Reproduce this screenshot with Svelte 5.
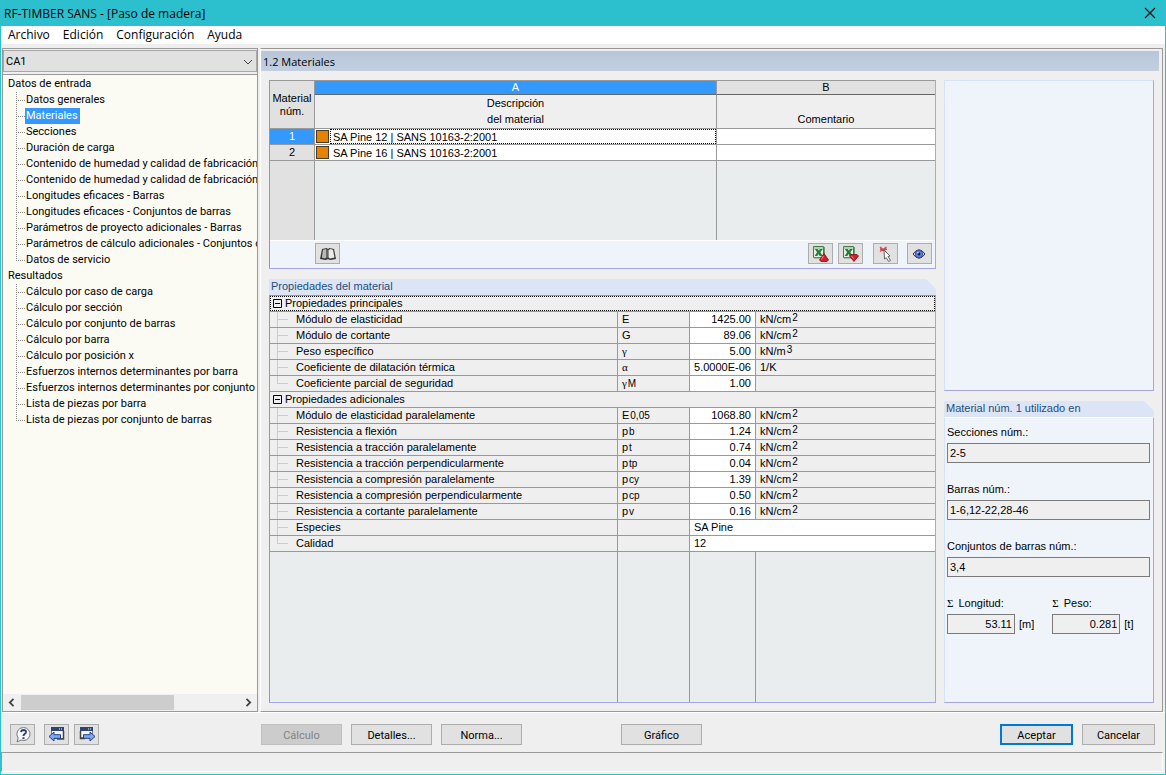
<script lang="ts">
  const menu = ['Archivo', 'Edición', 'Configuración', 'Ayuda']

  const tree = [
    {
      label: 'Datos de entrada',
      items: [
        'Datos generales',
        'Materiales',
        'Secciones',
        'Duración de carga',
        'Contenido de humedad y calidad de fabricación',
        'Contenido de humedad y calidad de fabricación',
        'Longitudes eficaces - Barras',
        'Longitudes eficaces - Conjuntos de barras',
        'Parámetros de proyecto adicionales - Barras',
        'Parámetros de cálculo adicionales - Conjuntos de barras',
        'Datos de servicio'
      ]
    },
    {
      label: 'Resultados',
      items: [
        'Cálculo por caso de carga',
        'Cálculo por sección',
        'Cálculo por conjunto de barras',
        'Cálculo por barra',
        'Cálculo por posición x',
        'Esfuerzos internos determinantes por barra',
        'Esfuerzos internos determinantes por conjunto de barras',
        'Lista de piezas por barra',
        'Lista de piezas por conjunto de barras'
      ]
    }
  ]

  const materials = [
    { id: 1, name: 'SA Pine 12 | SANS 10163-2:2001' },
    { id: 2, name: 'SA Pine 16 | SANS 10163-2:2001' }
  ]

  // name, symbol, subscript, value, unit, exponent
  const groups = [
    {
      label: 'Propiedades principales',
      rows: [
        ['Módulo de elasticidad', 'E', '', '1425.00', 'kN/cm', '2'],
        ['Módulo de cortante', 'G', '', '89.06', 'kN/cm', '2'],
        ['Peso específico', 'γ', '', '5.00', 'kN/m', '3'],
        ['Coeficiente de dilatación térmica', 'α', '', '5.0000E-06', '1/K', ''],
        ['Coeficiente parcial de seguridad', 'γ', 'M', '1.00', '', '']
      ]
    },
    {
      label: 'Propiedades adicionales',
      rows: [
        ['Módulo de elasticidad paralelamente', 'E', '0,05', '1068.80', 'kN/cm', '2'],
        ['Resistencia a flexión', 'p', 'b', '1.24', 'kN/cm', '2'],
        ['Resistencia a tracción paralelamente', 'p', 't', '0.74', 'kN/cm', '2'],
        ['Resistencia a tracción perpendicularmente', 'p', 'tp', '0.04', 'kN/cm', '2'],
        ['Resistencia a compresión paralelamente', 'p', 'cy', '1.39', 'kN/cm', '2'],
        ['Resistencia a compresión perpendicularmente', 'p', 'cp', '0.50', 'kN/cm', '2'],
        ['Resistencia a cortante paralelamente', 'p', 'v', '0.16', 'kN/cm', '2']
      ],
      texts: [
        ['Especies', 'SA Pine'],
        ['Calidad', '12']
      ]
    }
  ]

  const usedIn = [
    { id: 'sections', label: 'Secciones núm.:', value: '2-5' },
    { id: 'members', label: 'Barras núm.:', value: '1-6,12-22,28-46' },
    { id: 'sets', label: 'Conjuntos de barras núm.:', value: '3,4' }
  ]

  const totals = [
    { id: 'length', label: 'Longitud:', value: '53.11', unit: '[m]' },
    { id: 'weight', label: 'Peso:', value: '0.281', unit: '[t]' }
  ]

  let page = $state('Materiales')
  let current = $state(1)
  let open = $state([true, true])
</script>

{#snippet excel()}
  <path d="M1.500 1.500h10v11h-10z" fill="#e4f1e2" stroke="#3f7f45" />
  <path d="M12.500 2v9M2 13h9" stroke="#6d9c70" />
  <path d="M1.500 3h10" stroke="#7fb184" />
  <path d="M2.800 4h3l1 1.600L8 4h2.800L8.300 7.200 10.800 11H7.700L6.500 9 5.300 11H2.600l2.500-3.800z" fill="#2f7a3b" />
{/snippet}

{#snippet windowIcon()}
  <path d="M3.500 1.500h12v11h-12z" fill="#f4f6fb" stroke="#777c86" />
  <path d="M3 1h13v4H3z" fill="#30446f" />
  <path d="M11 3h1M13 3h1" stroke="#fff" />
  <path d="M15.500 5v8H9" fill="none" stroke="#444" stroke-width="1.500" />
{/snippet}

<div class="window">
  <header class="titlebar">
    <span>RF-TIMBER SANS - [Paso de madera]</span>
    <button class="close" aria-label="Cerrar">
      <svg width="12" height="12" viewBox="0 0 12 12"><path d="M1 1l10 10M11 1L1 11" stroke="#111" stroke-width="1.200" /></svg>
    </button>
  </header>

  <nav class="menu">
    {#each menu as item}
      <button>{item}</button>
    {/each}
  </nav>

  <div class="main">
    <aside class="sidebar">
      <div class="case">
        <select aria-label="Caso">
          <option>CA1</option>
        </select>
        <svg width="10" height="6" viewBox="0 0 10 6"><path d="M1 1l4 4 4-4" fill="none" stroke="#444" /></svg>
      </div>
      <div class="tree">
        {#each tree as branch}
          <div class="branch">{branch.label}</div>
          <ul>
            {#each branch.items as item}
              <li>
                <a href="#page" class:selected={page === item} onclick={() => (page = item)}>{item}</a>
              </li>
            {/each}
          </ul>
        {/each}
      </div>
      <div class="scrollbar">
        <button aria-label="Izquierda">
          <svg width="7" height="9" viewBox="0 0 7 9"><path d="M5.500 .8L1.800 4.500l3.700 3.700" fill="none" stroke="#444" stroke-width="1.800" /></svg>
        </button>
        <div class="track"><div class="thumb"></div></div>
        <button aria-label="Derecha">
          <svg width="7" height="9" viewBox="0 0 7 9"><path d="M1.500 .8l3.700 3.700-3.700 3.700" fill="none" stroke="#444" stroke-width="1.800" /></svg>
        </button>
      </div>
    </aside>

    <section class="content">
      <h1>1.2 Materiales</h1>
      <div class="columns">
        <div class="left">
          <div class="panel list">
            <table class="materials">
              <colgroup><col class="num" /><col /><col class="comment" /></colgroup>
              <thead>
                <tr class="letters">
                  <th rowspan="2" class="corner">Material<br />núm.</th>
                  <th class="letter active">A</th>
                  <th class="letter">B</th>
                </tr>
                <tr class="titles">
                  <th>Descripción<br />del material</th>
                  <th>Comentario</th>
                </tr>
              </thead>
              <tbody>
                {#each materials as m}
                  <tr class:current={current === m.id} onclick={() => (current = m.id)}>
                    <th>{m.id}</th>
                    <td>
                      <div class="material"><i class="swatch"></i><span>{m.name}</span></div>
                    </td>
                    <td></td>
                  </tr>
                {/each}
              </tbody>
            </table>
            <div class="filler materials-filler"><i></i><i></i><i></i></div>
            <div class="toolbar">
              <button class="icon library" aria-label="Biblioteca">
                <svg width="18" height="16" viewBox="0 0 18 16">
                  <path d="M1 13L3 3 8 2l1 1.500L10 2l5 1 2 10-5.500 1-2.500-.8-2.500.8z" fill="#34343c" />
                  <path d="M2.800 11.500L4 3.800 7 3v8.500l-1 1z" fill="#b9b9b2" />
                  <path d="M9.500 4.500L11 3l3 .8 1.500 7.700-4.500 1-1.500-1z" fill="#ecece6" />
                  <path d="M7 3l1.800 1.500v8L7 11.500z" fill="#6d6d68" />
                </svg>
              </button>
              <button class="icon" aria-label="Exportar a Excel">
                <svg width="18" height="18" viewBox="0 0 18 18">
                  {@render excel()}
                  <path d="M12 8.500l4.500 6.500-1.500 1.500H9L7.500 15z" fill="#d3202c" stroke="#7d0d14" stroke-width=".8" />
                  <path d="M11.500 11l-2 3.500" stroke="#f08a8f" />
                </svg>
              </button>
              <button class="icon" aria-label="Importar de Excel">
                <svg width="18" height="18" viewBox="0 0 18 18">
                  {@render excel()}
                  <path d="M12 16.500L7.500 11 9 9.500h6l1.500 1.500z" fill="#d3202c" stroke="#7d0d14" stroke-width=".8" />
                  <path d="M9.500 11l2 2.500" stroke="#f08a8f" />
                </svg>
              </button>
              <button class="icon pick" aria-label="Seleccionar">
                <svg width="18" height="18" viewBox="0 0 18 18">
                  <path d="M3 2l6 5M9.500 2L3 6.500M3 4.200h7" stroke="#d8454c" stroke-width="1.500" />
                  <path d="M7 5l6 6-2 .5 2.500 3.800-1.800 1.200-2.500-3.800L7.500 14z" fill="#fff" stroke="#555" stroke-width=".9" />
                </svg>
              </button>
              <button class="icon view" aria-label="Ver">
                <svg width="16" height="14" viewBox="0 0 16 14">
                  <path d="M1 7Q7-1.500 13 7 7 15.500 1 7z" fill="#c3cdf0" stroke="#333" />
                  <circle cx="7" cy="7" r="3.700" fill="#5d80e0" stroke="#2b459c" stroke-width=".8" />
                  <circle cx="7" cy="7" r="1.400" fill="#0d1330" />
                  <circle cx="6" cy="5.800" r=".8" fill="#dfe7ff" />
                </svg>
              </button>
            </div>
          </div>

          <div class="caption">Propiedades del material</div>
          <div class="panel properties">
            <table>
              <colgroup><col /><col class="symbol" /><col class="value" /><col class="unit" /></colgroup>
              {#each groups as group, g}
                <tbody>
                  <tr class="group" class:focused={g === 0}>
                    <th colspan="4">
                      <button onclick={() => (open[g] = !open[g])}>
                        <svg width="9" height="9" viewBox="0 0 9 9">
                          <path d={open[g] ? 'M.5.500h8v8h-8zM2 4.500h5' : 'M.5.500h8v8h-8zM2 4.500h5M4.500 2v5'} fill="none" stroke="#000" />
                        </svg>
                        {group.label}
                      </button>
                    </th>
                  </tr>
                  {#if open[g]}
                    {#each group.rows as [name, symbol, sub, value, unit, exp]}
                      <tr>
                        <th class="name">{name}</th>
                        <td class:greek={symbol === 'γ' || symbol === 'α'}>{symbol}{#if sub}<sub>{sub}</sub>{/if}</td>
                        <td class="number">{value}</td>
                        <td>{unit}{#if exp}<sup>{exp}</sup>{/if}</td>
                      </tr>
                    {/each}
                    {#each group.texts ?? [] as [name, value]}
                      <tr>
                        <th class="name">{name}</th>
                        <td></td>
                        <td class="text" colspan="2">{value}</td>
                      </tr>
                    {/each}
                  {/if}
                </tbody>
              {/each}
            </table>
            <div class="filler properties-filler"><i></i><i></i><i></i><i></i></div>
          </div>
        </div>

        <div class="right">
          <div class="panel preview"></div>
          <div class="caption">Material núm. {current} utilizado en</div>
          <div class="panel used">
            {#each usedIn as field}
              <div class="field">
                <label for={field.id}>{field.label}</label>
                <input id={field.id} value={field.value} readonly />
              </div>
            {/each}
            <div class="totals">
              {#each totals as total}
                <div class="field">
                  <label for={total.id}><span class="sigma">Σ</span> {total.label}</label>
                  <div class="sum">
                    <input id={total.id} value={total.value} readonly />
                    <span>{total.unit}</span>
                  </div>
                </div>
              {/each}
            </div>
          </div>
        </div>
      </div>
    </section>
  </div>

  <footer class="actions">
    <div class="nav">
      <button class="icon help" aria-label="Ayuda">
        <svg width="18" height="18" viewBox="0 0 18 18">
          <path d="M9.500 1.500a6.500 6.500 0 1 1-2.500 12.500L3 16l1.200-4A6.500 6.500 0 0 1 9.500 1.500z" fill="#f6f8fb" stroke="#777" />
          <path d="M7 6.200Q7.200 4 9.700 4q2.500.1 2.300 2.200-.2 1.300-1.600 2-.9.600-.9 1.800" fill="none" stroke="#2b3f80" stroke-width="1.900" />
          <path d="M8.500 11.200h2v1.900h-2z" fill="#2b3f80" />
        </svg>
      </button>
      <button class="icon" aria-label="Anterior">
        <svg width="18" height="18" viewBox="0 0 18 18">
          {@render windowIcon()}
          <path d="M1 10.500L6 6v2.700h6.500v3.600H6V15z" fill="#7fa8ec" stroke="#1f418f" />
        </svg>
      </button>
      <button class="icon" aria-label="Siguiente">
        <svg width="18" height="18" viewBox="0 0 18 18">
          <path d="M2.500 1.500h12v10h-12z" fill="#f4f6fb" stroke="#777c86" />
          <path d="M2 1h13v4H2z" fill="#30446f" />
          <path d="M10 3h1M12 3h1" stroke="#fff" />
          <path d="M2.500 5v7.500H7" fill="none" stroke="#444" stroke-width="1.500" />
          <path d="M17 10.500L12 6v2.700H5.500v3.600H12V15z" fill="#7fa8ec" stroke="#1f418f" />
        </svg>
      </button>
    </div>
    <div class="tasks">
      <button disabled>Cálculo</button>
      <button>Detalles...</button>
      <button>Norma...</button>
      <button class="graphic">Gráfico</button>
    </div>
    <div class="confirm">
      <button class="default">Aceptar</button>
      <button>Cancelar</button>
    </div>
  </footer>

  <div class="status"></div>
</div>

<style>
  :global(body) {
    background: #efefef;
  }

  .window {
    box-sizing: border-box;
    display: flex;
    flex-direction: column;
    min-height: 100vh;
    border: 1px solid #2fc0cd;
    border-top: 0;
    background: #efefef;
    color: #000;
    font-family: 'Liberation Sans', Arial, sans-serif;
    font-size: 11px;
    line-height: 15px;
  }

  button, input, select {
    box-sizing: border-box;
    margin: 0;
    padding: 0;
    border: 0;
    background: none;
    color: inherit;
    font: inherit;
  }

  svg {
    display: block;
  }

  .titlebar {
    display: flex;
    justify-content: space-between;
    align-items: center;
    height: 26px;
    padding: 0 9px 0 3px;
    background: #2cc0ce;
    font-family: 'Open Sans', 'Segoe UI', sans-serif;
    font-size: 12px;
  }

  .menu {
    display: flex;
    gap: 13px;
    height: 18px;
    padding: 0 7px;
    background: #fff;
    font-family: 'Open Sans', 'Segoe UI', sans-serif;
    font-size: 12px;
    line-height: 18px;
  }

  .main {
    display: flex;
    flex: 1;
    gap: 2px;
    padding: 4px 2px 0 1px;
  }

  .sidebar {
    box-sizing: border-box;
    display: flex;
    flex-direction: column;
    flex: none;
    width: 256px;
    border: 1px solid #999;
    font-family: Roboto, Tahoma, sans-serif;
  }

  .case {
    position: relative;
    padding: 1px 0 2px;
    border-bottom: 1px solid #999;
  }

  .case select {
    appearance: none;
    display: block;
    width: 100%;
    height: 22px;
    padding: 1px 2px 0;
    border: 1px solid #a8a8a8;
    border-radius: 0;
    background: #e1e1e1;
  }

  .case svg {
    position: absolute;
    right: 4px;
    top: 10px;
    pointer-events: none;
  }

  .tree {
    flex: 1;
    overflow: hidden;
    padding-top: 1px;
    background: #fcfbf3;
    line-height: 16px;
    white-space: nowrap;
  }

  .branch {
    padding-left: 5px;
  }

  .tree ul {
    margin: 0;
    padding: 0 0 0 13px;
    list-style: none;
  }

  .tree li {
    display: flex;
    height: 16px;
    background:
      repeating-linear-gradient(to bottom, #888 0 1px, transparent 1px 2px) 0 0 / 1px 16px no-repeat,
      repeating-linear-gradient(to right, #888 0 1px, transparent 1px 2px) 0 8px / 9px 1px no-repeat;
  }

  .tree li:last-child {
    background-size: 1px 8px, 9px 1px;
  }

  .tree a {
    margin-left: 9px;
    padding: 0 2px 0 1px;
    color: #000;
    text-decoration: none;
  }

  .tree a.selected {
    background: #3399ff;
    color: #fff;
  }

  .scrollbar {
    display: flex;
    height: 17px;
    background: #f0f0f0;
  }

  .scrollbar button {
    display: flex;
    justify-content: center;
    align-items: center;
    width: 17px;
  }

  .track {
    flex: 1;
    padding: 1px;
  }

  .thumb {
    width: 70%;
    height: 15px;
    background: #cdcdcd;
  }

  .content {
    display: flex;
    flex-direction: column;
    flex: 1;
    border-top: 1px solid #999;
    border-right: 1px solid #999;
    border-bottom: 1px solid #999;
    border-left: 1px solid #fff;
  }

  h1 {
    margin: 2px 3px 0 0;
    padding: 1px 2px 0;
    height: 19px;
    background: linear-gradient(#b8c6d9, #c3cfdf);
    font-family: 'Open Sans', 'Segoe UI', sans-serif;
    font-size: 11px;
    font-weight: 400;
    line-height: 20px;
  }

  .columns {
    display: flex;
    flex: 1;
    gap: 8px;
    padding: 9px 8px 8px;
  }

  .left {
    display: flex;
    flex-direction: column;
    flex: 1;
    min-width: 0;
  }

  .right {
    display: flex;
    flex-direction: column;
    width: 210px;
  }

  .panel {
    box-sizing: border-box;
    display: flex;
    flex-direction: column;
    border: 1px solid #a6a6e6;
    border-top-color: #d5e2f7;
    border-left-color: #d5e2f7;
    background: #eff4fa;
  }

  .caption {
    height: 16px;
    margin-top: 10px;
    padding-left: 2px;
    background: #dbe5f5;
    color: #1f4e7d;
    line-height: 15px;
    clip-path: polygon(0 0, calc(100% - 10px) 0, 100% 10px, 100% 100%, 0 100%);
  }

  table {
    width: 100%;
    table-layout: fixed;
    border-collapse: separate;
    border-spacing: 0;
  }

  th, td {
    box-sizing: border-box;
    overflow: hidden;
    padding: 0;
    border-right: 1px solid #999;
    border-bottom: 1px solid #999;
    font-weight: 400;
    text-align: left;
    white-space: nowrap;
  }

  tr > :last-child {
    border-right: 0;
  }

  .list {
    height: 189px;
    border-left-color: #999;
    border-top-color: #999;
  }

  .num {
    width: 45px;
  }

  .comment {
    width: 218px;
  }

  .materials th {
    background: #efefef;
    text-align: center;
  }

  .materials th.corner, .materials tbody th {
    background: #e1e1e1;
  }

  .materials th.corner {
    line-height: 13px;
  }

  .materials th.letter {
    height: 14px;
    border-bottom-color: #666;
    background: #e1e1e1;
    line-height: 13px;
  }

  .materials th.active, .materials .current th {
    background: #3399ff;
    color: #fff;
  }

  .materials .titles th {
    height: 33px;
    padding-bottom: 1px;
    line-height: 16px;
    vertical-align: bottom;
  }

  .materials tbody td, .materials tbody th {
    height: 16px;
  }

  .materials tbody td {
    background: #fff;
  }

  .material {
    display: flex;
    align-items: center;
    height: 15px;
    gap: 1px;
    padding-left: 1px;
  }

  .swatch {
    box-sizing: border-box;
    width: 13px;
    height: 13px;
    border: 1px solid #4a3a28;
    background: #e58200;
  }

  .material span {
    box-sizing: border-box;
    flex: 1;
    height: 15px;
    padding-left: 2px;
    border: 1px dotted transparent;
    line-height: 14px;
  }

  .current .material span {
    border-color: #000;
  }

  .filler {
    display: grid;
    flex: 1;
    background: #e9eded;
  }

  .filler i {
    border-right: 1px solid #999;
  }

  .filler i:last-child {
    border-right: 0;
  }

  .materials-filler {
    grid-template-columns: 45px 1fr 218px;
  }

  .materials-filler i:first-child {
    background: #e1e1e1;
  }

  .toolbar {
    display: flex;
    gap: 5px;
    padding: 2px 3px 4px 45px;
    border-top: 1px solid #fff;
  }

  .library {
    margin-right: auto;
  }

  .pick {
    margin-left: 5px;
  }

  .view {
    margin-left: 4px;
  }

  .icon {
    display: flex;
    justify-content: center;
    align-items: center;
    width: 25px;
    height: 21px;
    border: 1px solid #adadad;
    background: #e1e1e1;
  }

  .properties {
    flex: 1;
    border-left-color: #999;
    border-top-color: #999;
    background: #efefef;
  }

  .properties th, .properties td {
    height: 16px;
    padding-left: 4px;
    line-height: 15px;
  }

  .symbol {
    width: 72px;
  }

  .value {
    width: 66px;
  }

  .unit {
    width: 179px;
  }

  .properties th.name {
    padding-left: 26px;
    background:
      linear-gradient(#ccc, #ccc) 7px 0 / 1px 16px no-repeat,
      linear-gradient(#ccc, #ccc) 7px 7px / 11px 1px no-repeat;
  }

  .properties tr:last-child th.name {
    background-size: 1px 8px, 11px 1px;
  }

  .properties .group th {
    padding: 0;
  }

  .group button {
    display: flex;
    align-items: center;
    gap: 3px;
    width: 100%;
    height: 15px;
    padding-left: 2px;
    border: 1px dotted transparent;
    text-align: left;
  }

  .focused button {
    border-color: #000;
  }

  .properties td.number {
    padding-right: 4px;
    background: #fff;
    text-align: right;
  }

  .properties td.text {
    background: #fff;
  }

  .greek {
    font-family: 'Liberation Serif', serif;
  }

  sub, sup {
    margin-left: 1px;
    font-family: 'Liberation Sans', Arial, sans-serif;
    font-size: 10px;
    line-height: 0;
    vertical-align: baseline;
  }

  sup {
    vertical-align: 2px;
  }

  .properties-filler {
    grid-template-columns: 1fr 72px 66px 179px;
  }

  .preview {
    height: 311px;
  }

  .used {
    flex: 1;
    padding: 7px 3px 0 2px;
    border-top-color: #fff;
  }

  .field {
    display: flex;
    flex-direction: column;
    gap: 3px;
    margin-bottom: 19px;
  }

  input {
    width: 100%;
    height: 20px;
    padding: 0 2px;
    border: 1px solid #7a7a7a;
    background: #efefef;
    outline: none;
  }

  .totals {
    display: flex;
    gap: 18px;
  }

  .sigma {
    margin-right: 2px;
    font-family: 'Liberation Serif', serif;
  }

  .sum {
    display: flex;
    align-items: center;
    gap: 4px;
  }

  .sum input {
    width: 68px;
    text-align: right;
  }

  .actions {
    display: flex;
    align-items: center;
    padding: 11px 10px 7px 9px;
    border-top: 1px solid #fff;
    font-family: Roboto, Tahoma, sans-serif;
  }

  .nav {
    display: flex;
    gap: 5px;
    width: 251px;
  }

  .help {
    margin-right: 4px;
  }

  .tasks {
    display: flex;
    flex: 1;
    gap: 9px;
  }

  .graphic {
    margin-left: 90px;
  }

  .confirm {
    display: flex;
    gap: 9px;
  }

  .tasks button, .confirm button {
    width: 81px;
    height: 21px;
    padding-top: 1px;
    border: 1px solid #adadad;
    background: #e1e1e1;
  }

  .confirm button {
    width: 73px;
  }

  .tasks button:disabled {
    border-color: #bfbfbf;
    background: #ccc;
    color: #838383;
  }

  .confirm .default {
    border: 2px solid #0078d7;
  }

  .status {
    height: 18px;
    margin: 0 2px 2px 0;
    border: 1px solid #999;
    border-right-color: #fff;
    border-bottom-color: #fff;
  }
</style>
